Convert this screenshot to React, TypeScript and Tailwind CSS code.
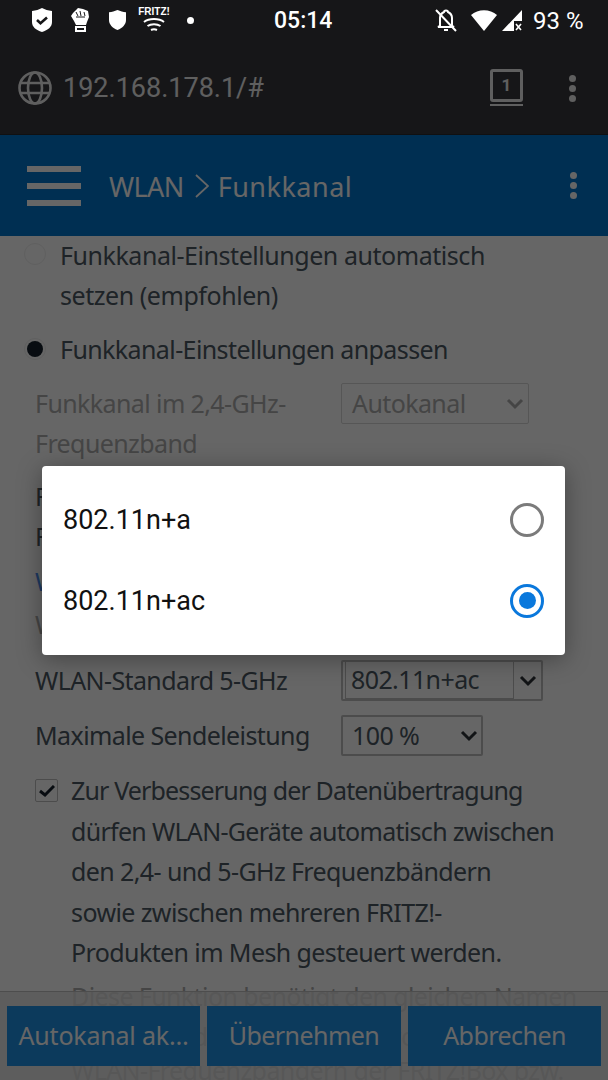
const Chevron = ({ className }: { className: string }) => (
  <svg viewBox="0 0 18 12" className={className} fill="none" stroke="currentColor" strokeWidth="3">
    <path d="M2 2l7 7 7-7" />
  </svg>
);

const StatusBar = () => (
  <div className="relative z-20 flex h-[40px] items-center bg-[#161618] font-[Roboto] text-white">
    <svg viewBox="0 0 20 24" className="ml-[32px] h-[24px] w-[20px]">
      <path fill="#fff" d="M10 0c3 1.500 6 2.500 10 3v11c0 5-4 8-10 10C4 22 0 19 0 14V3c4-.5 7-1.500 10-3z" />
      <path fill="none" stroke="#161618" strokeWidth="2.600" d="M5 12l3.500 3.200L15 9.500" />
    </svg>
    <svg viewBox="0 0 18 24" className="ml-[19px] h-[24px] w-[18px]">
      <path fill="#fff" d="M7 0l5 1 5 2 1 6-2 5-1 3H5L3 13 0 8l2-3 2-2z" />
      <path fill="none" stroke="#161618" strokeWidth="1" d="M5 4l2 4M9 3l1 5M13 4l1 4M5 9h9" />
      <path fill="#fff" d="M4 18h11v6H4z" />
      <path fill="#161618" d="M6 20h7v2H6z" />
    </svg>
    <svg viewBox="0 0 17 20" className="ml-[20px] h-[20px] w-[17px]">
      <path fill="#fff" d="M8.500 0c3 1.300 5.500 2 8.500 2.300V10c0 4.500-3.500 8-8.500 10C3.500 18 0 14.500 0 10V2.300C3 2 5.500 1.300 8.500 0z" />
    </svg>
    <div className="ml-[14px] flex w-[28px] flex-col items-center pb-[2px]">
      <span className="font-[Liberation_Sans] text-[10px] leading-[10px] font-bold whitespace-nowrap">FRITZ!</span>
      <svg viewBox="0 0 22 15" className="h-[15px] w-[22px]" fill="none" stroke="#fff" strokeWidth="2">
        <path d="M1 5c5-4 15-4 20 0M4.500 9c3.500-2.500 9.500-2.500 13 0M8 13c2-1 4-1 6 0" />
      </svg>
    </div>
    <div className="ml-[19px] h-[7px] w-[7px] rounded-full bg-white" />
    <span className="ml-[80px] w-[62px] pt-[1px] text-[23px] leading-none font-medium">05:14</span>
    <svg viewBox="0 0 24 24" className="ml-[98px] h-[24px] w-[24px]" fill="none" stroke="#fff" strokeWidth="2">
      <path d="M6 18V10c0-3 2-5 4-6 0-2 4-2 4 0 2 1 4 3 4 6v8l2 1H4z" />
      <path d="M10 22h4M2 2l20 21" />
    </svg>
    <svg viewBox="0 0 26 21" className="ml-[13px] h-[21px] w-[26px]">
      <path fill="#fff" d="M0 5C7-1.500 19-1.500 26 5L13 21z" />
    </svg>
    <svg viewBox="0 0 20 21" className="ml-[5px] h-[21px] w-[20px]">
      <path fill="#fff" d="M0 21L20 0v11h-8v10z" />
      <path stroke="#fff" strokeWidth="1.600" d="M14 14l5 6M19 14l-5 6" />
    </svg>
    <span className="ml-[11px] pt-[1px] text-[24px] leading-none whitespace-nowrap">93 %</span>
  </div>
);

const Toolbar = () => (
  <div className="flex h-[95px] items-center border-b border-[#2a2a2c] bg-[#37373c] font-[Roboto] text-[#eeeeee]">
    <svg viewBox="0 0 34 34" className="mt-[2px] ml-[18px] h-[34px] w-[34px]" fill="none" stroke="currentColor" strokeWidth="2.600">
      <circle cx="17" cy="17" r="15.500" />
      <ellipse cx="17" cy="17" rx="7" ry="15.500" />
      <path d="M2 12h30M2 22h30" />
    </svg>
    <span className="mt-[3px] ml-[11px] text-[27px]">192.168.178.1/#</span>
    <div className="ml-[226px] flex flex-col items-center">
      <div className="flex h-[33px] w-[33px] items-center justify-center rounded-[3px] border-[3px] border-[#eeeeee] text-[17px] leading-none font-bold">
        1
      </div>
      <div className="mt-[2px] h-[2px] w-[33px] bg-[#eeeeee]" />
    </div>
    <div className="mt-[2px] ml-[46px] flex flex-col gap-[3px]">
      <div className="h-[7px] w-[7px] rounded-full bg-[#eeeeee]" />
      <div className="h-[7px] w-[7px] rounded-full bg-[#eeeeee]" />
      <div className="h-[7px] w-[7px] rounded-full bg-[#eeeeee]" />
    </div>
  </div>
);

const Header = () => (
  <div className="flex h-[101px] items-center bg-[#0076cd] text-white">
    <div className="ml-[27px] flex w-[54px] flex-col gap-[11px]">
      <div className="h-[6px] bg-white" />
      <div className="h-[6px] bg-white" />
      <div className="h-[6px] bg-white" />
    </div>
    <span className="ml-[28px] pt-[1px] text-[27px] leading-none tracking-[-0.6px]">WLAN</span>
    <svg viewBox="0 0 14 24" className="ml-[11px] h-[24px] w-[14px]" fill="none" stroke="#fff" strokeWidth="1.800">
      <path d="M1 1l12 11L1 23" />
    </svg>
    <span className="ml-[9px] w-[134px] pt-[1px] text-[27px] leading-none tracking-[0.5px]">Funkkanal</span>
    <div className="ml-[218px] flex flex-col gap-[3px]">
      <div className="h-[7px] w-[7px] rounded-full bg-white" />
      <div className="h-[7px] w-[7px] rounded-full bg-white" />
      <div className="h-[7px] w-[7px] rounded-full bg-white" />
    </div>
  </div>
);

const Content = () => (
  <div className="h-[844px] overflow-hidden bg-white text-[25px] tracking-[-0.6px] text-[#4b5762]">
    <div className="-mt-[1px] flex pl-[24px]">
      <div className="mt-[8px] h-[22px] w-[22px] rounded-full border border-[#efefef] bg-white" />
      <p className="ml-[14px] leading-[40px] tracking-[-0.45px]">
        Funkkanal-Einstellungen automatisch
        <br />
        setzen (empfohlen)
      </p>
    </div>
    <div className="mt-[14px] flex items-center pl-[24px]">
      <div className="flex h-[22px] w-[22px] items-center justify-center rounded-full border border-[#efefef]">
        <div className="h-[16px] w-[16px] rounded-full bg-[#15202b]" />
      </div>
      <span className="ml-[14px] leading-[40px]">Funkkanal-Einstellungen anpassen</span>
    </div>
    <div className="mt-[14px] flex pl-[35px] text-[#adadad]">
      <p className="w-[306px] leading-[40px]">
        Funkkanal im 2,4-GHz-
        <br />
        Frequenzband
      </p>
      <div className="flex h-[41px] w-[188px] items-center justify-between rounded-[2px] border border-[#d8d8d8] pr-[4px] pl-[10px]">
        <span>Autokanal</span>
        <Chevron className="h-[12px] w-[18px]" />
      </div>
    </div>
    <p className="mt-[13px] pl-[35px] leading-[40px]">
      Funkkanal im 5-GHz-
      <br />
      Frequenzband
    </p>
    <p className="mt-[5px] pl-[35px] leading-[40px] text-[#4d8ff0]">WLAN-Funknetz</p>
    <p className="mt-[3px] pl-[35px] leading-[40px] text-[#adadad]">WLAN-Standard 2,4-GHz</p>
    <div className="mt-[16px] flex items-center pl-[35px]">
      <span className="w-[306px]">WLAN-Standard 5-GHz</span>
      <div className="flex h-[41px] w-[202px] items-stretch rounded-[2px] border-2 border-[#bdbdbd] pl-[2px]">
        <div className="flex w-[169px] items-center border-r border-b border-l border-[#bdbdbd] pl-[5px]">802.11n+ac</div>
        <div className="flex flex-1 items-center justify-center">
          <Chevron className="h-[12px] w-[18px] text-[#2f3438]" />
        </div>
      </div>
    </div>
    <div className="mt-[14px] flex items-center pl-[35px]">
      <span className="w-[306px]">Maximale Sendeleistung</span>
      <div className="flex h-[41px] w-[142px] items-center justify-between rounded-[2px] border-2 border-[#bdbdbd] pr-[3px] pl-[9px]">
        <span>100 %</span>
        <Chevron className="h-[12px] w-[18px] text-[#2f3438]" />
      </div>
    </div>
    <div className="mt-[14px] flex pl-[35px]">
      <div className="mt-[9px] flex h-[23px] w-[23px] items-center justify-center rounded-[2px] border border-[#bdbdbd]">
        <svg viewBox="0 0 16 12" className="h-[12px] w-[16px]" fill="none" stroke="#15202b" strokeWidth="3">
          <path d="M1 6l5 4 9-9" />
        </svg>
      </div>
      <div className="ml-[13px] leading-[40.500px] whitespace-nowrap">
        <p className="tracking-[-0.85px]">Zur Verbesserung der Datenübertragung</p>
        <p className="tracking-[-0.7px]">dürfen WLAN-Geräte automatisch zwischen</p>
        <p>den 2,4- und 5-GHz Frequenzbändern</p>
        <p>sowie zwischen mehreren FRITZ!-</p>
        <p>Produkten im Mesh gesteuert werden.</p>
        <p className="mt-[3px] text-[#adadad]">Diese Funktion benötigt den gleichen Namen</p>
        <p className="text-[#adadad]">(SSID) und das gleiche Kennwort in den</p>
        <p className="-mt-[7px] text-[#adadad]">WLAN-Frequenzbändern der FRITZ!Box bzw.</p>
      </div>
    </div>
  </div>
);

const BottomBar = () => (
  <div className="absolute inset-x-0 bottom-0 flex h-[89px] items-start gap-[7px] border-t border-[#c0c0c0] bg-[#e4e4e4]/80 pt-[14px] pl-[7px] text-[25px] tracking-[-0.55px] text-white">
    <div className="flex h-[60px] w-[193px] items-center justify-center bg-[#1e91e6] tracking-[-0.2px]">Autokanal ak…</div>
    <div className="flex h-[60px] w-[194px] items-center justify-center bg-[#1e91e6]">Übernehmen</div>
    <div className="flex h-[60px] w-[193px] items-center justify-center bg-[#1e91e6]">Abbrechen</div>
  </div>
);

const Dialog = () => (
  <div className="absolute top-[426px] left-[42px] flex h-[189px] w-[523px] flex-col rounded-[4px] bg-white pt-[13px] font-[Roboto] text-[27px] text-[#111111] shadow-[0_4px_24px_rgba(0,0,0,0.35)]">
    <div className="flex h-[81px] items-center justify-between px-[21px]">
      <span className="pt-[2px]">802.11n+a</span>
      <div className="h-[34px] w-[34px] rounded-full border-[3px] border-[#7b7b7b]" />
    </div>
    <div className="flex h-[81px] items-center justify-between px-[21px]">
      <span className="pt-[2px]">802.11n+ac</span>
      <div className="flex h-[34px] w-[34px] items-center justify-center rounded-full border-[3px] border-[#0a78dc]">
        <div className="h-[17px] w-[17px] rounded-full bg-[#0a78dc]" />
      </div>
    </div>
  </div>
);

export default function App() {
  return (
    <div className="relative h-[1080px] w-[608px] overflow-hidden bg-white font-['Noto_Sans']">
      <StatusBar />
      <div className="relative h-[1040px] overflow-hidden">
        <Toolbar />
        <Header />
        <Content />
        <BottomBar />
        <div className="absolute inset-0 bg-black/60" />
        <Dialog />
      </div>
    </div>
  );
}
